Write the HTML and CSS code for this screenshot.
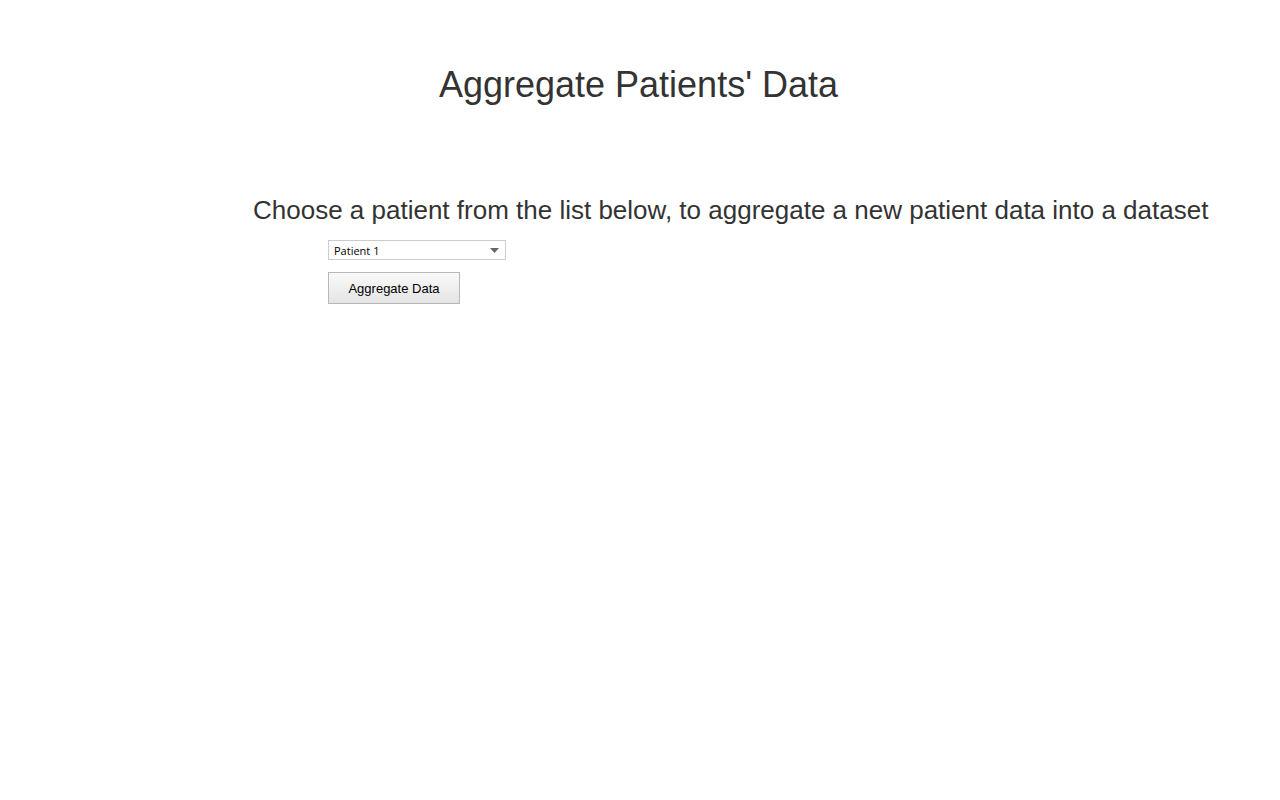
FILE: index.html
```html
<!DOCTYPE html>
<html>
<head>
<meta charset="utf-8">
<link rel="stylesheet" href="styles.css">
</head>
<body>
<div class="page">
  <h1 class="title">Aggregate Patients' Data</h1>
  <h2 class="subtitle">Choose a patient from the list below, to aggregate a new patient data into a dataset</h2>
  <div class="form">
    <div class="select">
      <span class="select-text">Patient 1</span>
      <svg class="caret" width="9" height="5" viewBox="0 0 9 5"><path d="M0 0H9L4.5 5Z" fill="#666"/></svg>
    </div>
    <button class="btn">Aggregate Data</button>
  </div>
</div>
</body>
</html>
```
FILE: styles.css
```css
html, body { margin: 0; padding: 0; background: #fff; }
body { font-family: "Liberation Sans", Arial, sans-serif; color: #333; }
.page { display: flex; flex-direction: column; }
.title {
  margin: 63px 3px 0 0;
  font-size: 36px;
  font-weight: normal;
  line-height: 44px;
  text-align: center;
  color: #333;
}
.subtitle {
  margin: 88px 0 0 253px;
  font-size: 26px;
  font-weight: normal;
  line-height: 30px;
  color: #333;
  white-space: nowrap;
}
.form {
  margin: 15px 0 0 328px;
  display: flex;
  flex-direction: column;
  align-items: flex-start;
  gap: 12px;
}
.select {
  box-sizing: border-box;
  width: 178px;
  height: 20px;
  border: 1px solid #ccc;
  background: #fff;
  display: flex;
  align-items: center;
  justify-content: space-between;
  padding: 0 6px 0 5px;
}
.select-text {
  font-family: "Open Sans", "Noto Sans", sans-serif;
  font-size: 11px;
  color: #000;
}
.caret { display: block; }
.btn {
  box-sizing: border-box;
  width: 132px;
  height: 32px;
  border: 1px solid #b8b8b8;
  border-radius: 0;
  background: linear-gradient(#fafafa, #e4e4e4);
  font-family: "Liberation Sans", Arial, sans-serif;
  font-size: 13px;
  color: #000;
  padding: 0;
}
```
